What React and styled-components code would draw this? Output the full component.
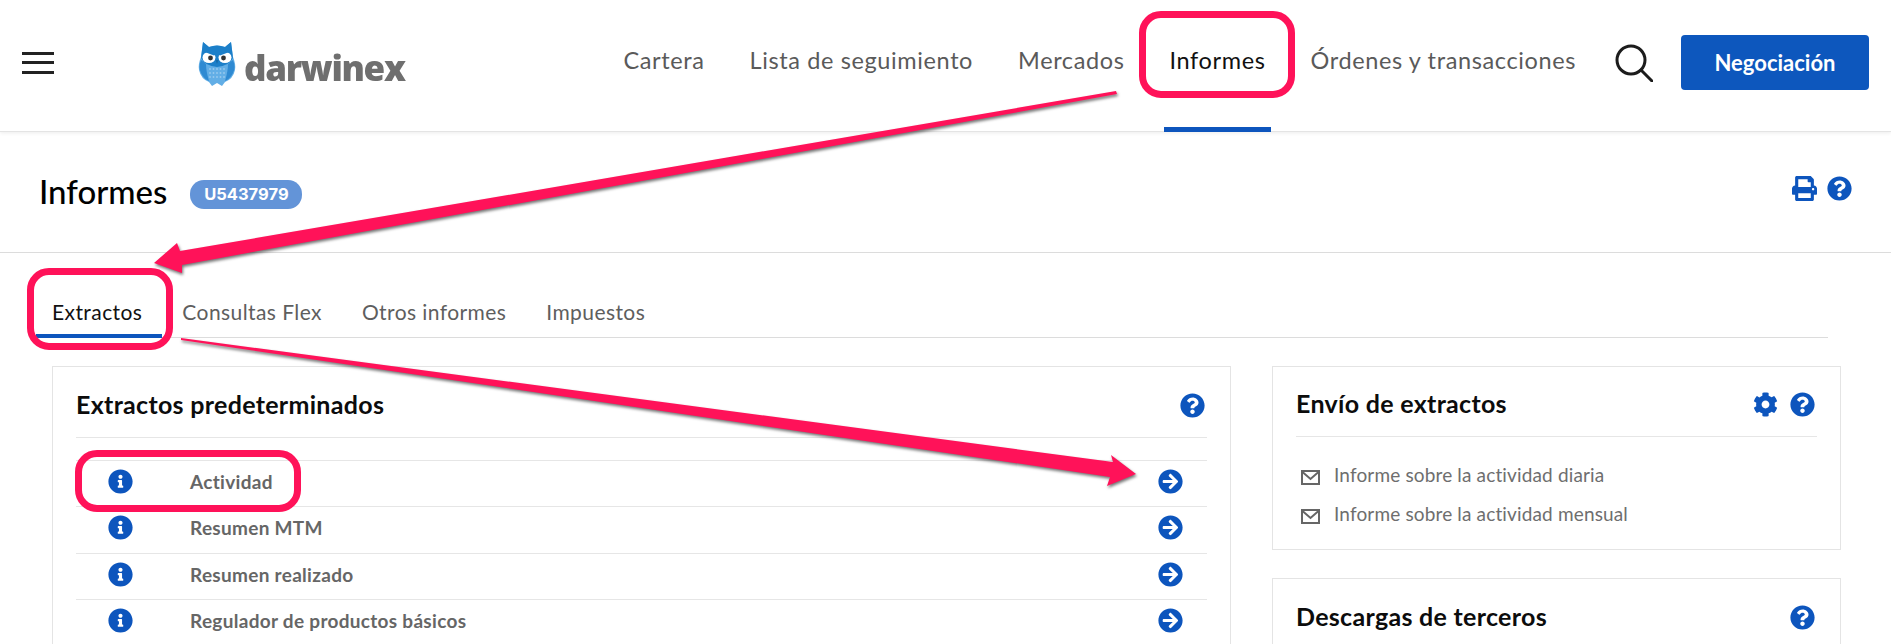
import React from "react";
import styled, { createGlobalStyle } from "styled-components";
import { FaQuestionCircle, FaInfoCircle, FaArrowCircleRight, FaPrint, FaCog } from "react-icons/fa";

const Global = createGlobalStyle`
  html, body { margin: 0; padding: 0; background: #fff; }
  body { font-family: "Lato", "Liberation Sans", sans-serif; }
`;

const Page = styled.div`
  position: relative;
  width: 1891px;
  height: 644px;
  overflow: hidden;
  background: #fff;
`;

const Header = styled.header`
  display: flex;
  align-items: center;
  height: 132px;
  padding: 0 22px;
  box-sizing: border-box;
  border-bottom: 1px solid #e4e4e4;
  box-shadow: 0 1px 4px rgba(0, 0, 0, 0.08);
`;

const Burger = styled.div`
  display: flex;
  flex-direction: column;
  justify-content: space-between;
  width: 32px;
  height: 22px;
  margin-bottom: 6px;
  & > span { display: block; height: 3px; background: #222; }
`;

const Logo = styled.div`
  display: flex;
  align-items: flex-end;
  gap: 8px;
  margin-left: 144px;
  margin-bottom: 5px;
`;

const LogoWord = styled.span`
  font-family: "Open Sans", sans-serif;
  font-weight: 800;
  font-size: 35px;
  line-height: 36px;
  letter-spacing: -1.3px;
  color: #6f6f6f;
  filter: blur(0.3px);
`;

const Nav = styled.nav`
  display: flex;
  align-items: stretch;
  align-self: stretch;
  gap: 33px;
  margin-left: auto;
`;

const NavItem = styled.a`
  display: flex;
  align-items: center;
  padding: 0 6px 8px;
  font-size: 23.5px;
  letter-spacing: 0.62px;
  color: ${(p) => (p.$active ? "#111" : "#5a5a5a")};
  border-bottom: 5px solid ${(p) => (p.$active ? "#0d55bd" : "transparent")};
  margin-bottom: -1px;
`;

const SearchBox = styled.div`
  display: flex;
  margin-left: 33px;
  margin-right: 28px;
  margin-bottom: 6px;
`;

const TradeButton = styled.button`
  width: 188px;
  height: 55px;
  margin-bottom: 7px;
  border: 0;
  border-radius: 4px;
  background: #0d57bd;
  color: #fff;
  font-family: "Lato", sans-serif;
  font-weight: 700;
  font-size: 22px;
`;

const TitleBar = styled.div`
  display: flex;
  align-items: center;
  justify-content: space-between;
  height: 121px;
  padding: 0 39px;
  box-sizing: border-box;
  border-bottom: 1px solid #dcdcdc;
`;

const TitleGroup = styled.div`
  display: flex;
  align-items: center;
  gap: 23px;
`;

const PageTitle = styled.h1`
  margin: -2px 0 0;
  font-size: 33px;
  font-weight: 500;
  color: #000;
`;

const Badge = styled.span`
  display: inline-flex;
  align-items: center;
  justify-content: center;
  width: 112px;
  height: 29px;
  margin-top: 4px;
  border-radius: 14px;
  background: #6394d8;
  color: #fff;
  font-family: "Inter", sans-serif;
  font-weight: 700;
  font-size: 16.5px;
`;

const IconRow = styled.div`
  display: flex;
  align-items: center;
  gap: ${(p) => p.$gap || 12}px;
  margin-bottom: ${(p) => p.$lift || 0}px;
  color: #0d55bd;
  line-height: 0;
`;

const Tabs = styled.div`
  display: flex;
  align-items: stretch;
  height: 84px;
  margin: 0 63px 0 36px;
  border-bottom: 1px solid #dcdcdc;
`;

const Tab = styled.a`
  display: flex;
  align-items: center;
  padding: 36px ${(p) => (p.$active ? "20px" : "20px")} 0 ${(p) => (p.$active ? "16px" : "20px")};
  font-size: 21px;
  letter-spacing: 0.42px;
  color: ${(p) => (p.$active ? "#111" : "#5e5e5e")};
  border-bottom: 4px solid ${(p) => (p.$active ? "#0d55bd" : "transparent")};
  margin-bottom: -1px;
`;

const Columns = styled.div`
  display: grid;
  grid-template-columns: 1179px 569px;
  gap: 41px;
  padding: 28px 0 0 52px;
`;

const SideColumn = styled.div`
  display: flex;
  flex-direction: column;
  gap: 28px;
`;

const Card = styled.section`
  box-sizing: border-box;
  border: 1px solid #e4e4e4;
  padding: 0 23px;
  min-height: ${(p) => p.$min || 0}px;
`;

const CardHeader = styled.div`
  display: flex;
  align-items: center;
  justify-content: space-between;
  height: ${(p) => p.$h || 70}px;
  padding: 6px 2px 0 0;
  box-sizing: border-box;
  border-bottom: ${(p) => (p.$plain ? "0" : "1px solid #e6e6e6")};
`;

const CardTitle = styled.h2`
  margin: -3px 0 0;
  font-size: 25px;
  font-weight: 700;
  letter-spacing: 0.3px;
  color: #0c0c0c;
`;

const ReportList = styled.div`
  margin-top: 22px;
`;

const ReportRow = styled.div`
  display: grid;
  grid-template-columns: 24px 1fr 25px;
  column-gap: 58px;
  box-sizing: border-box;
  height: 46.33px;
  padding: 8px 24px 0 32px;
  border-top: 1px solid #e6e6e6;
`;

const ReportName = styled.span`
  font-size: 19px;
  font-weight: 700;
  letter-spacing: 0.3px;
  line-height: 25px;
  color: #666;
`;

const RowIcon = styled.span`
  color: #0d55bd;
  line-height: 0;
`;

const MailList = styled.div`
  display: flex;
  flex-direction: column;
  padding: 18px 0 16px 5px;
`;

const MailRow = styled.div`
  display: flex;
  align-items: center;
  gap: 14px;
  height: 39px;
  font-size: 19px;
  letter-spacing: 0.15px;
  color: #6e6e6e;
  & > svg { margin-top: 5px; }
`;

const Highlight = styled.div`
  position: absolute;
  box-sizing: border-box;
  left: ${(p) => p.$x}px;
  top: ${(p) => p.$y}px;
  width: ${(p) => p.$w}px;
  height: ${(p) => p.$h}px;
  border: 7px solid #ff1259;
  border-radius: 22px;
`;

const Annotations = styled.svg`
  position: absolute;
  inset: 0;
  width: 1891px;
  height: 644px;
  pointer-events: none;
  filter: drop-shadow(1px 2px 1.5px rgba(0, 0, 0, 0.55));
`;

const Owl = () => (
  <svg width="38" height="45" viewBox="0 0 38 45" style={{ filter: "blur(0.45px)" }}>
    <path d="M5 1 L11 6 Q19 3 27 6 L33 1 L35 16 Q38 23 37 29 Q35 38 27 41 L24 45 L19 42 L14 45 L11 41 Q3 38 1 29 Q0 23 3 16 Z" fill="#62aee6" />
    <path d="M5 1 L11 6 Q19 3 27 6 L33 1 L35 17 Q31 25 19 26 Q7 25 3 17 Z" fill="#1c7fc9" />
    <path d="M3 19 Q0 26 3 32 Q6 38 11 40 Q8 30 8 23 Z M35 19 Q38 26 35 32 Q32 38 27 40 Q30 30 30 23 Z" fill="#2f8ad2" />
    <ellipse cx="11" cy="16.5" rx="6.5" ry="5.5" fill="#fff" />
    <ellipse cx="27" cy="16.5" rx="6.5" ry="5.5" fill="#fff" />
    <circle cx="12.5" cy="17" r="2.4" fill="#333" />
    <circle cx="25.5" cy="17" r="2.4" fill="#333" />
    <path d="M4 10 L16 14.5 L19 13 L22 14.5 L34 10 L32 8 H6 Z" fill="#1c7fc9" />
    <path d="M17.5 19 L19 23 L20.5 19 Z" fill="#156aa8" />
    <g fill="#98c9ee">
      {[28, 32, 36].map((y) => [12, 15.5, 19, 22.5, 26].map((x) => <circle key={x + "-" + y} cx={x} cy={y} r="0.9" />))}
    </g>
  </svg>
);

const Mail = () => (
  <svg width="19" height="15" viewBox="0 0 19 15" fill="none" stroke="#666" strokeWidth="2">
    <rect x="1" y="1" width="17" height="13" />
    <path d="M1.5 2 L9.5 9 L17.5 2" />
  </svg>
);

const Search = () => (
  <svg width="38" height="38" viewBox="0 0 38 38" fill="none" stroke="#1c1c1c" strokeWidth="3">
    <circle cx="16" cy="16" r="14" />
    <path d="M26 26 L37 37" strokeLinecap="round" />
  </svg>
);

const navItems = ["Cartera", "Lista de seguimiento", "Mercados", "Informes", "Órdenes y transacciones"];
const tabs = ["Extractos", "Consultas Flex", "Otros informes", "Impuestos"];
const reports = ["Actividad", "Resumen MTM", "Resumen realizado", "Regulador de productos básicos"];

export default function App() {
  return (
    <Page>
      <Global />
      <Header>
        <Burger><span /><span /><span /></Burger>
        <Logo>
          <Owl />
          <LogoWord>darwinex</LogoWord>
        </Logo>
        <Nav>
          {navItems.map((n) => (
            <NavItem key={n} $active={n === "Informes"}>{n}</NavItem>
          ))}
        </Nav>
        <SearchBox><Search /></SearchBox>
        <TradeButton>Negociación</TradeButton>
      </Header>
      <TitleBar>
        <TitleGroup>
          <PageTitle>Informes</PageTitle>
          <Badge>U5437979</Badge>
        </TitleGroup>
        <IconRow $lift={8} $gap={10}><FaPrint size={25} /><FaQuestionCircle size={25} /></IconRow>
      </TitleBar>
      <Tabs>
        {tabs.map((t) => (
          <Tab key={t} $active={t === "Extractos"}>{t}</Tab>
        ))}
      </Tabs>
      <Columns>
        <Card $min={400}>
          <CardHeader $h={71}>
            <CardTitle>Extractos predeterminados</CardTitle>
            <IconRow><FaQuestionCircle size={25} /></IconRow>
          </CardHeader>
          <ReportList>
            {reports.map((r) => (
              <ReportRow key={r}>
                <RowIcon><FaInfoCircle size={25} /></RowIcon>
                <ReportName>{r}</ReportName>
                <RowIcon><FaArrowCircleRight size={25} /></RowIcon>
              </ReportRow>
            ))}
          </ReportList>
        </Card>
        <SideColumn>
          <Card>
            <CardHeader>
              <CardTitle>Envío de extractos</CardTitle>
              <IconRow><FaCog size={25} /><FaQuestionCircle size={25} /></IconRow>
            </CardHeader>
            <MailList>
              <MailRow><Mail />Informe sobre la actividad diaria</MailRow>
              <MailRow><Mail />Informe sobre la actividad mensual</MailRow>
            </MailList>
          </Card>
          <Card $min={120}>
            <CardHeader $plain>
              <CardTitle>Descargas de terceros</CardTitle>
              <IconRow><FaQuestionCircle size={25} /></IconRow>
            </CardHeader>
          </Card>
        </SideColumn>
      </Columns>
      <Highlight $x={1139} $y={11} $w={156} $h={87} />
      <Highlight $x={27} $y={268} $w={146} $h={82} />
      <Highlight $x={75} $y={450} $w={226} $h={62} />
      <Annotations viewBox="0 0 1891 644">
        <polygon fill="#ff1259" points="1116,91 1117,94 182,265 182,273 154,263 177,243 180,251" />
        <polygon fill="#ff1259" points="181,338 181,340 1110,477 1107,486 1136,474 1111,455 1113,462" />
      </Annotations>
    </Page>
  );
}
